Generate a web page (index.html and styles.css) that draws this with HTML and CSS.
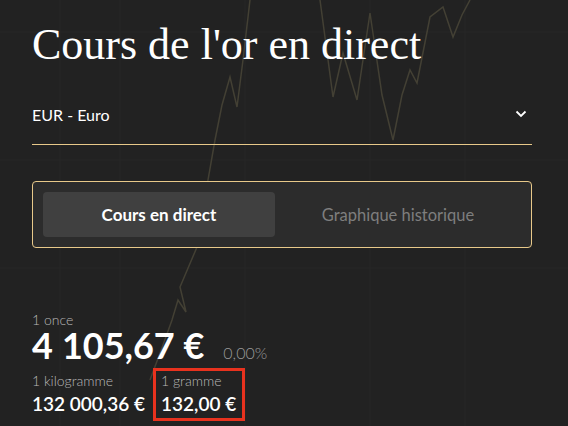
FILE: index.html
```html
<!DOCTYPE html>
<html lang="fr">
<head>
<meta charset="utf-8">
<title>Cours de l'or en direct</title>
<link rel="stylesheet" href="styles.css">
</head>
<body>
<div class="page">
  <svg class="bg" width="568" height="426" viewBox="0 0 568 426">
    <g stroke="#262626" stroke-width="1">
      <line x1="60" y1="0" x2="60" y2="426"/>
      <line x1="120" y1="0" x2="120" y2="426"/>
      <line x1="245" y1="0" x2="245" y2="426"/>
      <line x1="370" y1="0" x2="370" y2="426"/>
      <line x1="465" y1="0" x2="465" y2="426"/>
      <line x1="0" y1="32" x2="568" y2="32"/>
      <line x1="0" y1="160" x2="568" y2="160"/>
      <line x1="0" y1="268" x2="568" y2="268"/>
    </g>
    <polyline fill="none" stroke="#434034" stroke-width="1.5" points="150,380 163,345 172,320 178,300 186,312 180,287 197,247 208,180 215,140 222,105 230,77 237,107 243,60 250,0"/>
    <polyline fill="none" stroke="#434034" stroke-width="1.5" points="320,0 333,97 343,53 357,100 370,13 382,95 393,140 402,95 410,70 417,83 430,17 443,7 453,37 462,15 470,0"/>
  </svg>
  <main class="content">
    <h1 class="title">Cours de l'or en direct</h1>
    <div class="select">
      <span>EUR - Euro</span>
      <svg class="chev" width="12" height="8" viewBox="0 0 12 8"><path d="M1.5 1.5 L6 6 L10.5 1.5" fill="none" stroke="#fff" stroke-width="1.8"/></svg>
    </div>
    <div class="tabs">
      <div class="tab active">Cours en direct</div>
      <div class="tab">Graphique historique</div>
    </div>
    <div class="prices">
      <div class="label">1 once</div>
      <div class="main-row">
        <span class="big">4&#8239;105,67 €</span>
        <span class="pct">0,00%</span>
      </div>
      <div class="sub-row">
        <div class="cell">
          <div class="label">1 kilogramme</div>
          <div class="mid">132&#8239;000,36 €</div>
        </div>
        <div class="cell boxed">
          <div class="label">1 gramme</div>
          <div class="mid">132,00 €</div>
        </div>
      </div>
    </div>
  </main>
</div>
</body>
</html>
```
FILE: styles.css
```css
html, body {
  margin: 0;
  padding: 0;
  background: #222222;
}
.page {
  position: relative;
  width: 568px;
  height: 426px;
  overflow: hidden;
  background: #222222;
  font-family: Lato, "Noto Sans", sans-serif;
  color: #ffffff;
}
.bg {
  position: absolute;
  left: 0;
  top: 0;
}
.content {
  position: relative;
  padding: 0 0 0 32px;
  width: 500px;
  display: flex;
  flex-direction: column;
}
.title {
  margin: 20px 0 0 0;
  font-family: "Liberation Serif", serif;
  font-weight: 400;
  font-size: 44px;
  line-height: 50px;
  color: #ffffff;
}
.select {
  margin-top: 30px;
  height: 28px;
  display: flex;
  align-items: center;
  justify-content: space-between;
  border-bottom: 1.5px solid #e8c98a;
  font-size: 16px;
  padding-bottom: 16px;
}
.chev {
  margin-right: 5px;
}
.tabs {
  margin-top: 36px;
  height: 45px;
  padding: 10px;
  border: 1px solid #e8c98a;
  border-radius: 4px;
  background: #2c2c2c;
  display: flex;
}
.tab {
  flex: 1;
  display: flex;
  align-items: center;
  justify-content: center;
  font-size: 16.5px;
  font-weight: 400;
  color: #7e7e7e;
  border-radius: 4px;
}
.tab.active {
  background: #404040;
  color: #ffffff;
  font-weight: 700;
  font-size: 17px;
  flex: 0 0 232px;
}
.prices {
  margin-top: 64px;
  display: flex;
  flex-direction: column;
}
.label {
  font-size: 14px;
  font-weight: 300;
  color: #b8b8b8;
  line-height: 16px;
}
.main-row {
  display: flex;
  align-items: baseline;
  gap: 19px;
  line-height: 34px;
}
.big {
  font-size: 36px;
  font-weight: 700;
  letter-spacing: -0.3px;
}
.pct {
  font-size: 16px;
  font-weight: 300;
  color: #9a9a9a;
}
.sub-row {
  display: flex;
  gap: 8px;
  margin-top: 3px;
}
.cell {
  display: flex;
  flex-direction: column;
  gap: 3px;
}
.mid {
  font-size: 19px;
  font-weight: 600;
  line-height: 24px;
}
.boxed {
  border: 3px solid #e8321e;
  margin-top: -5px;
  padding: 2px 6px 2px 5px;
}
```
